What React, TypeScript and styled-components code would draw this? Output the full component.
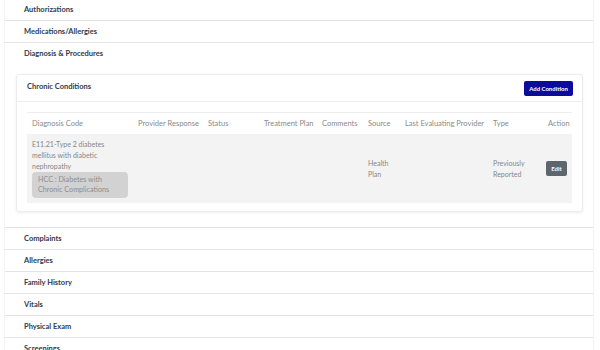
import styled, { createGlobalStyle } from "styled-components";

const GlobalStyle = createGlobalStyle`
  body {
    margin: 0;
    background: #ffffff;
    font-family: Lato, "Open Sans", sans-serif;
  }
`;

const Page = styled.div`
  width: 588px;
  padding-left: 5px;
  margin-top: -1px;
`;

const Accordion = styled.div`
  background: #fff;
  box-shadow: 0 0 2px rgba(0, 0, 0, 0.14);
`;

const Item = styled.div`
  border-bottom: 1px solid #e4e4e4;
`;

const ItemHeader = styled.div`
  height: 21px;
  display: flex;
  align-items: center;
  padding-left: 19px;
  font-size: 7.5px;
  font-weight: 700;
  color: #2e3a4f;
`;

const ItemBody = styled.div`
  padding: 10px 10px 15px 11px;
`;

const Card = styled.div`
  border: 1px solid #ececec;
  border-radius: 3px;
  box-shadow: 0 1px 3px rgba(0, 0, 0, 0.07);
`;

const CardHeader = styled.div`
  height: 20px;
  display: flex;
  align-items: flex-start;
  justify-content: space-between;
  padding: 6px 9px 0 10px;
  border-bottom: 1px solid #eeeeee;
  font-size: 7.5px;
  line-height: 10px;
  font-weight: 700;
  color: #2e3a4f;
`;

const CardTitle = styled.span`
  margin-top: 1px;
`;

const PrimaryButton = styled.button`
  background: #0b0b9c;
  color: #fff;
  border: none;
  border-radius: 2px;
  font-family: inherit;
  font-size: 6px;
  font-weight: 700;
  height: 15px;
  width: 49px;
  padding: 0;
`;

const CardBody = styled.div`
  padding: 10px 10px 8px 10px;
`;

const columns = "106px 70px 56px 58px 46px 37px 88px 53px 31px";

const HeadRow = styled.div`
  display: grid;
  grid-template-columns: ${columns};
  height: 21px;
  align-items: center;
  border-top: 1px solid #eeeeee;
  font-size: 7.5px;
  color: #8a8a8a;
`;

const DataRow = styled.div`
  display: grid;
  grid-template-columns: ${columns};
  align-items: center;
  background: #f3f3f3;
  font-size: 7px;
  line-height: 11px;
  color: #878787;
`;

const Cell = styled.div<{ $indent?: number }>`
  padding-left: ${(p) => p.$indent ?? 5}px;
`;

const CodeCell = styled.div`
  padding: 5px 5px 5px 5px;
`;

const Badge = styled.div`
  width: 84px;
  padding: 3px 6px;
  background: #d2d2d2;
  border-radius: 4px;
  line-height: 10px;
  font-size: 7.2px;
  color: #8e8e8e;
`;

const EditButton = styled.button`
  display: block;
  background: #5d656d;
  color: #fff;
  border: none;
  border-radius: 2px;
  font-family: inherit;
  font-size: 6px;
  font-weight: 700;
  height: 15px;
  width: 21px;
  padding: 0;
`;

const before = ["Authorizations", "Medications/Allergies"];
const after = [
  "Complaints",
  "Allergies",
  "Family History",
  "Vitals",
  "Physical Exam",
  "Screenings",
];
const heads = [
  "Diagnosis Code",
  "Provider Response",
  "Status",
  "Treatment Plan",
  "Comments",
  "Source",
  "Last Evaluating Provider",
  "Type",
];

const App = () => (
  <Page>
    <GlobalStyle />
    <Accordion>
      {before.map((t) => (
        <Item key={t}>
          <ItemHeader>{t}</ItemHeader>
        </Item>
      ))}
      <Item>
        <ItemHeader>Diagnosis &amp; Procedures</ItemHeader>
        <ItemBody>
          <Card>
            <CardHeader>
              <CardTitle>Chronic Conditions</CardTitle>
              <PrimaryButton>Add Condition</PrimaryButton>
            </CardHeader>
            <CardBody>
              <HeadRow>
                {heads.map((h) => (
                  <Cell key={h}>{h}</Cell>
                ))}
                <Cell $indent={7}>Action</Cell>
              </HeadRow>
              <DataRow>
                <CodeCell>
                  E11.21-Type 2 diabetes
                  <br />
                  mellitus with diabetic
                  <br />
                  nephropathy
                  <Badge>
                    HCC : Diabetes with
                    <br />
                    Chronic Complications
                  </Badge>
                </CodeCell>
                <Cell />
                <Cell />
                <Cell />
                <Cell />
                <Cell>
                  Health
                  <br />
                  Plan
                </Cell>
                <Cell />
                <Cell>
                  Previously
                  <br />
                  Reported
                </Cell>
                <Cell>
                  <EditButton>Edit</EditButton>
                </Cell>
              </DataRow>
            </CardBody>
          </Card>
        </ItemBody>
      </Item>
      {after.map((t) => (
        <Item key={t}>
          <ItemHeader>{t}</ItemHeader>
        </Item>
      ))}
    </Accordion>
  </Page>
);

export default App;
